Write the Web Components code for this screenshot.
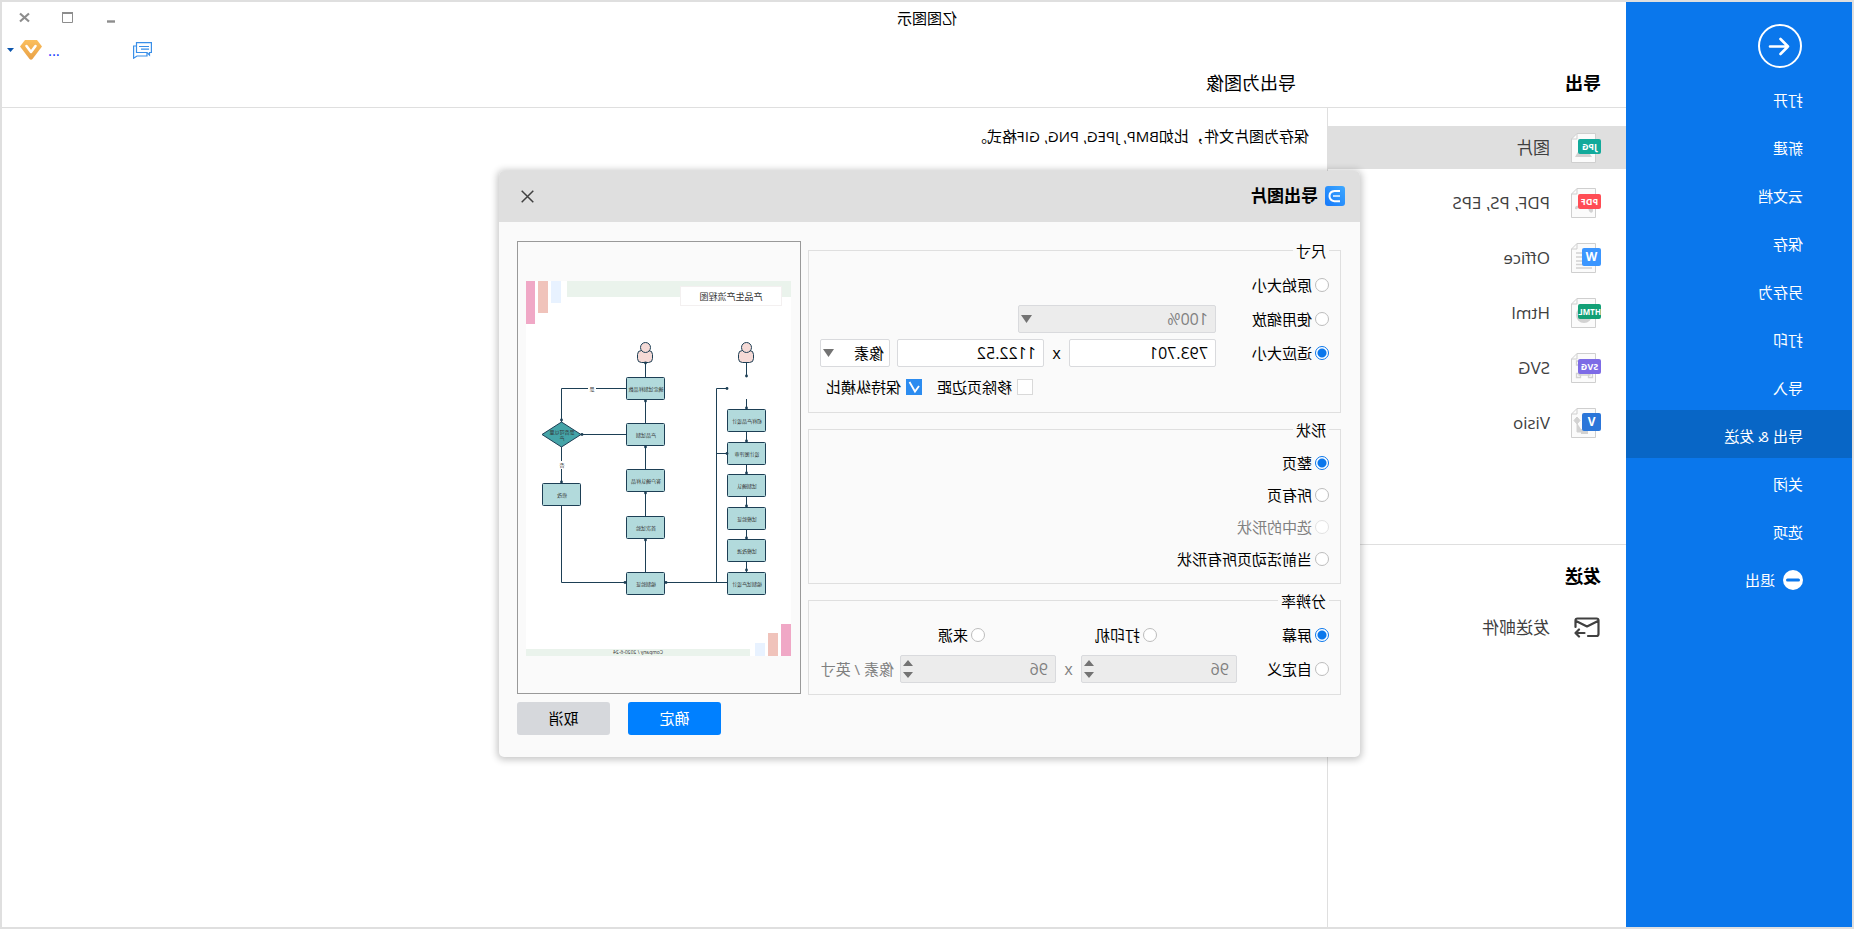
<!DOCTYPE html>
<html lang="zh-CN">
<head>
<meta charset="utf-8">
<title>亿图图示</title>
<style>
  html, body { margin: 0; }
  body {
    font-family: "Open Sans", "Noto Sans CJK SC", sans-serif;
    font-size: 15px;
    line-height: 20px;
    color: #000;
    background: #dfdfdf;
    overflow-x: hidden;
  }
</style>
</head>
<body>
<app-window></app-window>

<script>
const define = (name, html, setup) => {
  const template = document.createElement('template');
  template.innerHTML = html;
  customElements.define(name, class extends HTMLElement {
    constructor() {
      super();
      this.attachShadow({ mode: 'open' }).append(template.content.cloneNode(true));
    }
    connectedCallback() {
      if (setup) setup(this, this.shadowRoot);
    }
  });
};

/* Sidebar entry */
define('nav-item', `
  <style>
    :host { display: block; }
    a {
      display: flex; align-items: center; gap: 8px;
      box-sizing: border-box; height: 48px; padding: 4px 49px 0;
      color: #fff; text-decoration: none;
    }
    :host([active]) a { background: #0866c6; }
  </style>
  <a href="#"><slot name="icon"></slot><slot></slot></a>
`);

define('side-nav', `
  <style>
    :host { display: block; background: #0a77ec; }
    header { padding: 22px 50px 6px; }
    button { display: block; width: 44px; height: 44px; padding: 0; border: 0; background: none; }
    nav { display: flex; flex-direction: column; }
    svg { display: block; }
  </style>
  <header>
    <button type="button" aria-label="返回">
      <svg width="44" height="44" viewBox="0 0 44 44" fill="none" stroke="#fff" stroke-width="2">
        <circle cx="22" cy="22" r="21"/>
        <path d="M32 22.5H14M21.5 15L14 22.5L21.5 30" stroke-width="2.6" stroke-linecap="round" stroke-linejoin="round"/>
      </svg>
    </button>
  </header>
  <nav>
    <nav-item>打开</nav-item>
    <nav-item>新建</nav-item>
    <nav-item>云文档</nav-item>
    <nav-item>保存</nav-item>
    <nav-item>另存为</nav-item>
    <nav-item>打印</nav-item>
    <nav-item>导入</nav-item>
    <nav-item active>导出 &amp; 发送</nav-item>
    <nav-item>关闭</nav-item>
    <nav-item>选项</nav-item>
    <nav-item>
      <svg slot="icon" width="20" height="20" viewBox="0 0 20 20">
        <circle cx="10" cy="10" r="10" fill="#fff"/>
        <path d="M4.500 10H15.500" stroke="#0a77ec" stroke-width="3" stroke-linecap="round"/>
      </svg>
      退出
    </nav-item>
  </nav>
`);

/* Sheet of paper with a coloured format badge */
const sheets = {
  JPG: ['#12aa9b', '<path d="M9 24L15 15L19 20L22 17L26 24Z" fill="#d2d2d2"/>'],
  PDF: ['#ff4d55', '<path d="M8 22C8 19 11 18 13 20L12 23C10 26 8 25 8 22ZM19 17L25 18C27 20 26 22 24 21Z" fill="#d2d2d2"/>'],
  W: ['#3b96ff', '<path d="M9 10H25M9 14H25M9 18H25M9 21.500H25M9 25H25" stroke="#d2d2d2" stroke-width="1.300"/>'],
  HTML: ['#12a076', '<circle cx="17" cy="17" r="8" fill="#d2d2d2"/>'],
  SVG: ['#7d6be6', '<path d="M11 9H22V22H11ZM8.500 20.500h4v4h-4zM20.500 20.500h4v4h-4zM20.500 8h4v4h-4z" fill="none" stroke="#d2d2d2" stroke-width="1.300"/>'],
  V: ['#2b76d9', '<path d="M24 9l3 3.500-3 3.500-3-3.500zM24 15V24H18" fill="#d2d2d2" stroke="#d2d2d2"/><rect x="13" y="21" width="7" height="5" fill="#d2d2d2"/>']
};
define('doc-icon', `
  <style>:host { display: block; } svg { display: block; font-family: "Open Sans", sans-serif; font-weight: 700; }</style>
  <svg width="30" height="30" viewBox="0 0 30 30"></svg>
`, (host, root) => {
  const kind = host.getAttribute('kind');
  const [color, art] = sheets[kind];
  const short = kind.length === 1;
  const badge = short
    ? `<rect y="5" width="19" height="18" rx="2" fill="${color}"/><text x="9.500" y="18" font-size="12" fill="#fff" text-anchor="middle">${kind}</text>`
    : `<rect y="6" width="23" height="15" rx="2" fill="${color}"/><text x="11.500" y="17" font-size="${kind.length > 3 ? 8 : 9}" fill="#fff" text-anchor="middle">${kind}</text>`;
  root.querySelector('svg').innerHTML =
    `<path d="M5.500 .5H24L29.500 6V29.500H5.500Z" fill="#fbfbfb" stroke="#cfcfcf"/>
     <path d="M24 .5V6H29.500" fill="none" stroke="#cfcfcf"/>${art}${badge}`;
});

define('file-item', `
  <style>
    :host { display: block; }
    a {
      display: flex; align-items: center; gap: 21px;
      height: 43px; padding: 0 25px;
      font-size: 17px; color: #404040; text-decoration: none;
    }
    :host([selected]) a { background: #dfdfdf; }
  </style>
  <a href="#"><slot name="icon"></slot><slot></slot></a>
`);

define('export-list', `
  <style>
    :host { display: block; border-right: 1px solid #dfdfdf; }
    nav { display: flex; flex-direction: column; gap: 12px; padding: 18px 0 100px; border-bottom: 1px solid #dfdfdf; }
    h2 { margin: 0; padding: 19px 25px 18px; font-size: 18px; line-height: 24px; }
    svg { display: block; margin: 0 3px 0 1px; }
  </style>
  <nav>
    <file-item selected><doc-icon slot="icon" kind="JPG"></doc-icon>图片</file-item>
    <file-item><doc-icon slot="icon" kind="PDF"></doc-icon>PDF, PS, EPS</file-item>
    <file-item><doc-icon slot="icon" kind="W"></doc-icon>Office</file-item>
    <file-item><doc-icon slot="icon" kind="HTML"></doc-icon>Html</file-item>
    <file-item><doc-icon slot="icon" kind="SVG"></doc-icon>SVG</file-item>
    <file-item><doc-icon slot="icon" kind="V"></doc-icon>Visio</file-item>
  </nav>
  <h2>发送</h2>
  <file-item>
    <svg slot="icon" width="26" height="21" viewBox="0 0 26 21" fill="none" stroke="#404040" stroke-width="2.200" stroke-linecap="round" stroke-linejoin="round">
      <path d="M12 19H3.500Q1.500 19 1.500 17V3.500Q1.500 1.500 3.500 1.500H22.500Q24.500 1.500 24.500 3.500V10M2 4L13 9.500L24 4M15.500 16H24.500M21 12.500L24.500 16L21 19.500"/>
    </svg>
    发送邮件
  </file-item>
`);

define('title-bar', `
  <style>
    :host {
      display: grid; grid-template: 35px 1fr / 299px 1fr auto;
      box-sizing: border-box; height: 106px; border-bottom: 1px solid #dfdfdf;
    }
    .name { grid-area: 1 / 1 / 2 / 4; text-align: center; padding: 6px 226px 0 0; }
    h1, h2 { margin: 0; font-size: 18px; line-height: 24px; align-self: end; padding-bottom: 12px; }
    h1 { padding-left: 25px; }
    h2 { font-weight: 400; padding-left: 31px; }
    .window { grid-area: 1 / 3; display: flex; gap: 32px; padding: 5px 17px 0 0; justify-content: flex-end; }
    .window button { height: 20px; }
    .tools { grid-area: 2 / 3; display: flex; align-items: center; height: 22px; padding: 2px 5px 0 0; }
    button { display: flex; align-items: center; padding: 0; border: 0; background: none; font: inherit; color: #1035ff; }
    .account { margin-left: 73px; gap: 6px; }
    .tools button { height: 22px; }
  </style>
  <div class="name">亿图图示</div>
  <h1>导出</h1>
  <h2>导出为图像</h2>
  <div class="window">
    <button type="button" aria-label="最小化"><svg width="11" height="11" viewBox="0 0 11 11"><path d="M1 9.500H9" stroke="#8d8d8d" stroke-width="2.400"/></svg></button>
    <button type="button" aria-label="最大化"><svg width="11" height="11" viewBox="0 0 11 11"><path d="M.5 .5H10.500V10.500H.5Z" fill="none" stroke="#8d8d8d"/><path d="M0 1H11" stroke="#8d8d8d" stroke-width="2"/></svg></button>
    <button type="button" aria-label="关闭"><svg width="11" height="11" viewBox="0 0 11 11"><path d="M1 1.500L10 9.500M10 1.500L1 9.500" stroke="#8d8d8d" stroke-width="2.200"/></svg></button>
  </div>
  <div class="tools">
    <button type="button" aria-label="消息">
      <svg width="19" height="17" viewBox="0 0 19 17" fill="#fff" stroke="#3a8fe8" stroke-width="1.200">
        <path d="M18.400 4V16.200L15 14H5V4Z"/><path d="M.6 .6H15.500V10.500H5L2.500 13V10.500H.6Z"/><path d="M3 4.500H13M3 7.200H11"/>
      </svg>
    </button>
    <button type="button" class="account" aria-label="账户">
      <span>...</span>
      <svg width="22" height="20" viewBox="0 0 22 20"><defs><linearGradient id="gold" x2="0" y2="1"><stop stop-color="#fbbf5e"/><stop offset="1" stop-color="#e8a046"/></linearGradient></defs><path d="M5 0H17L22 6.500L12.500 19Q11 20.600 9.500 19L0 6.500Z" fill="url(#gold)"/><path d="M6.500 6L11 12L15.500 6" fill="none" stroke="#fff" stroke-width="2.600" stroke-linecap="round" stroke-linejoin="round"/></svg>
      <svg width="7" height="4" viewBox="0 0 7 4"><path d="M0 0H7L3.500 4Z" fill="#0b55ad"/></svg>
    </button>
  </div>
`);

/* Framed set of options with a caption on its border */
define('group-box', `
  <style>
    :host { display: block; }
    fieldset { margin: 0; padding: 7px 11px 8px; border: 1px solid #dfdfdf; min-width: 0; }
    legend { padding: 0 3px; line-height: 20px; }
  </style>
  <fieldset><legend></legend><slot></slot></fieldset>
`, (host, root) => { root.querySelector('legend').textContent = host.getAttribute('caption'); });

/* Preview of the page that will be exported */
const box = (x, y, label) =>
  `<rect x="${x - 19}.500" y="${y}.500" width="38" height="22" rx="1" fill="#b2dadc" stroke="#1d3f55"/>
   <text x="${x}" y="${y + 14}">${label}</text>`;
const dot = (x, y) => `<circle cx="${x}" cy="${y}" r="1.400" fill="#1d3f55" stroke="none"/>`;
const person = x =>
  `<rect x="${x - 7}.500" y="108.500" width="15" height="12" rx="4" fill="#f5dad6"/><circle cx="${x + .5}" cy="105.500" r="5" fill="#f5dad6"/>`;
define('flow-preview', `
  <style>
    :host { display: block; border: 1px solid #999; height: 453px; box-sizing: border-box; }
    svg { display: block; width: 100%; height: 100%; }
    text { font-size: 5px; fill: #333; stroke: none; text-anchor: middle; }
    .heading { font-size: 9px; }
    .footer { font-size: 5px; }
  </style>
  <svg viewBox="0 0 282 451" preserveAspectRatio="xMinYMin meet" fill="none" stroke="#1d3f55">
    <g stroke="none">
      <rect x="9" y="39" width="265" height="375" fill="#fff"/>
      <rect x="9" y="39" width="224" height="16" fill="#eaf3ec"/>
      <rect x="18" y="44" width="102" height="20" fill="#f3f0f0"/>
      <rect x="19" y="45" width="100" height="18" fill="#fff"/>
      <rect x="239" y="39" width="10" height="22" fill="#e8f2ff"/>
      <rect x="252" y="39" width="10" height="32" fill="#f0c3bb"/>
      <rect x="265" y="39" width="9" height="43" fill="#f0a8c6"/>
      <rect x="50" y="407" width="224" height="7" fill="#eaf3ec"/>
      <rect x="35" y="401" width="10" height="13" fill="#e8f2ff"/>
      <rect x="22" y="391" width="10" height="23" fill="#f0c3bb"/>
      <rect x="9" y="382" width="10" height="32" fill="#f0a8c6"/>
    </g>
    <path d="M53.500 121V135M53.500 157V340M73 146.500H83.500V340.500M73 211.500H83M73 340.500H135M154.500 121V340M174 146.500H238.500V340.500H174M174 192.500H238"/>
    ${person(53)}${person(154)}
    ${box(53, 167, '初样产品设计')}${box(53, 200, '设计图评审')}${box(53, 232, '试制确认')}${box(53, 265, '试模验证')}${box(53, 297, '试模改进')}${box(53, 330, '编制试产设计')}
    ${box(154, 135, '确定试制样品数')}${box(154, 181, '产品试制')}${box(154, 227, '客户确认样品')}${box(154, 274, '首次试验')}${box(154, 330, '编制验证')}
    ${box(238, 241, '修改')}
    <path d="M238.500 180L258 192.500L238.500 205L219 192.500Z" fill="#45a4a8"/>
    <text x="238" y="192">是否可以量</text><text x="238" y="198">产</text>
    <g stroke="none"><rect x="204" y="143" width="8" height="7" fill="#fff"/><rect x="235" y="219" width="7" height="8" fill="#fff"/></g>
    <text x="208" y="149">是</text><text x="238" y="225">否</text>
    ${dot(53.500, 134)}${dot(73, 146.500)}${dot(73, 211.500)}${dot(53.500, 166)}${dot(53.500, 199)}${dot(53.500, 231)}${dot(53.500, 264)}${dot(53.500, 296)}${dot(53.500, 328)}
    ${dot(154.500, 121)}${dot(154.500, 159)}${dot(154.500, 205)}${dot(154.500, 251)}${dot(154.500, 298)}${dot(134, 340.500)}${dot(175, 340.500)}
    ${dot(238.500, 178)}${dot(238.500, 240)}${dot(218, 192.500)}
    <text class="heading" x="69" y="58">产品生产流程图</text>
    <text class="footer" x="162" y="412">Company / 2020-6-24</text>
  </svg>
`);

const updown = `<svg width="10" height="20" viewBox="0 0 10 20"><path d="M0 7L5 1L10 7ZM0 13H10L5 19Z" fill="#737373"/></svg>`;
const down = `<svg width="11" height="8" viewBox="0 0 11 8"><path d="M0 0H11L5.500 8Z" fill="#737373"/></svg>`;
define('export-dialog', `
  <style>
    :host {
      display: block; width: 861px; max-width: 100%; background: #fafafa;
      border-radius: 5px; overflow: hidden; box-shadow: 0 1px 7px 2px rgba(0,0,0,.22);
    }
    header { display: flex; align-items: center; gap: 7px; height: 51px; padding: 0 22px 0 15px; background: #dfdfdf; }
    h2 { flex: 1; margin: 0; font-size: 17px; line-height: 24px; }
    header svg { display: block; }
    button { font: inherit; border: 0; padding: 0; }
    header button { background: none; }
    .body { display: grid; grid-template-columns: 1fr 284px; gap: 7px; padding: 19px 19px 22px 19px; }
    .groups { display: flex; flex-direction: column; gap: 7px; }
    .row { display: flex; align-items: center; height: 34px; }
    .row.tight { height: 32px; }
    .row.checks { gap: 15px; padding-left: 296px; }
    label { display: flex; align-items: center; gap: 3px; white-space: nowrap; }
    .checks label { gap: 5px; }
    label.size { width: 113px; }
    label.third { width: 172px; }
    label.custom { width: 92px; }
    label.off { color: #808080; }
    input, select { font: inherit; box-sizing: border-box; margin: 0; }
    input[type=radio] {
      appearance: none; width: 14px; height: 14px; border: 1px solid #bdbdbd;
      border-radius: 50%; background: #fff; flex: none;
    }
    input[type=radio]:checked { border-color: #0a77ec; background: radial-gradient(circle, #0a77ec 4px, #fff 5px); }
    input[type=radio]:disabled { border-color: #e2e2e2; }
    input[type=checkbox] { appearance: none; width: 16px; height: 16px; border: 1px solid #d9d9d9; background: #fff; flex: none; }
    input[type=checkbox]:checked {
      border: 0;
      background: #2c8cf0 url("data:image/svg+xml,%3Csvg xmlns='http://www.w3.org/2000/svg' viewBox='0 0 16 16'%3E%3Cpath d='M3 7L7 12.500L12.500 3' fill='none' stroke='%23fff' stroke-width='1.800'/%3E%3C/svg%3E");
    }
    .field { display: grid; align-items: center; }
    .field > * { grid-area: 1 / 1; }
    .field > svg { justify-self: end; margin-right: 3px; pointer-events: none; }
    .field input, .field select {
      appearance: none; width: 100%; height: 28px; padding: 0 7px;
      border: 1px solid #d9dadd; border-radius: 2px; background: #fff; color: #000; font-size: 16px;
    }
    .field input[type=number] { appearance: textfield; }
    .field :disabled { background: #ececec; color: #808080; opacity: 1; }
    .field .unit { font-size: 15px; padding: 0 5px; }
    .zoom { width: 198px; } .length { width: 147px; } .units { width: 70px; margin-left: 7px; } .dpi { width: 156px; }
    .times { width: 25px; text-align: center; font-size: 16px; }
    .gray { color: #808080; }
    .per { margin-left: 6px; }
    .side { display: flex; flex-direction: column; gap: 8px; }
    .actions { display: flex; justify-content: flex-end; gap: 18px; }
    .actions button { width: 93px; height: 33px; border-radius: 3px; background: #d6d8dc; color: #000; }
    .actions .primary { background: #0080ff; color: #fff; }
  </style>
  <header>
    <svg width="20" height="20" viewBox="0 0 20 20"><defs><linearGradient id="blue" x2="1" y2="1" x1="0" y1="0"><stop stop-color="#3fa9ff"/><stop offset="1" stop-color="#1478fa"/></linearGradient></defs><rect width="20" height="20" rx="3" fill="url(#blue)"/><path d="M5 5H10.500Q15.500 5.500 15.500 10T10.500 15.200H5" fill="none" stroke="#fff" stroke-width="2"/><path d="M5 10H12" stroke="#bfe0ff" stroke-width="1.800"/></svg>
    <h2>导出图片</h2>
    <button type="button" aria-label="关闭对话框"><svg width="13" height="13" viewBox="0 0 13 13"><path d="M.7 .7L12.300 12.300M12.300 .7L.7 12.300" stroke="#404040" stroke-width="1.500"/></svg></button>
  </header>
  <form class="body">
    <div class="groups">
      <group-box caption="尺寸">
        <div class="row"><label><input type="radio" name="size">原始大小</label></div>
        <div class="row">
          <label class="size"><input type="radio" name="size">使用缩放</label>
          <span class="field zoom"><select disabled aria-label="缩放比例"><option>100%</option></select>${down}</span>
        </div>
        <div class="row">
          <label class="size"><input type="radio" name="size" checked>适应大小</label>
          <span class="field length"><input type="text" value="793.701" aria-label="宽度"></span>
          <span class="times">x</span>
          <span class="field length"><input type="text" value="1122.52" aria-label="高度"></span>
          <span class="field units"><select class="unit" aria-label="单位"><option>像素</option></select>${down}</span>
        </div>
        <div class="row checks">
          <label><input type="checkbox">移除页边距</label>
          <label><input type="checkbox" checked>保持纵横比</label>
        </div>
      </group-box>
      <group-box caption="形状">
        <div class="row tight"><label><input type="radio" name="shape" checked>整页</label></div>
        <div class="row tight"><label><input type="radio" name="shape">所有页</label></div>
        <div class="row tight"><label class="off"><input type="radio" name="shape" disabled>选中的形状</label></div>
        <div class="row tight"><label><input type="radio" name="shape">当前活动页所有形状</label></div>
      </group-box>
      <group-box caption="分辨率">
        <div class="row">
          <label class="third"><input type="radio" name="dpi" checked>屏幕</label>
          <label class="third"><input type="radio" name="dpi">打印机</label>
          <label><input type="radio" name="dpi">来源</label>
        </div>
        <div class="row">
          <label class="custom"><input type="radio" name="dpi">自定义</label>
          <span class="field dpi"><input type="number" value="96" disabled aria-label="水平分辨率">${updown}</span>
          <span class="times gray">x</span>
          <span class="field dpi"><input type="number" value="96" disabled aria-label="垂直分辨率">${updown}</span>
          <span class="gray per">像素 / 英寸</span>
        </div>
      </group-box>
    </div>
    <div class="side">
      <flow-preview></flow-preview>
      <div class="actions">
        <button type="button" class="primary">确定</button>
        <button type="button">取消</button>
      </div>
    </div>
  </form>
`);

/* The whole interface is shown as in a mirror: the tree below is written left to right and flipped once here. */
define('app-window', `
  <style>
    :host {
      display: grid; grid-template-columns: 226px 1fr; position: relative;
      box-sizing: border-box; min-height: 100vh; border: 2px solid #dfdfdf;
      background: #fff; transform: scaleX(-1);
    }
    main { display: grid; grid-template: auto 1fr / 299px 1fr; min-width: 0; }
    title-bar { grid-column: 1 / 3; }
    p { margin: 0; padding: 18px; }
    .layer {
      position: absolute; inset: 0; display: flex; align-items: center; justify-content: center;
      padding: 0 5px 2px 0; box-sizing: border-box;
    }
  </style>
  <side-nav></side-nav>
  <main>
    <title-bar></title-bar>
    <export-list></export-list>
    <p>保存为图片文件，比如BMP, JPEG, PNG, GIF格式。</p>
  </main>
  <div class="layer"><export-dialog role="dialog" aria-label="导出图片"></export-dialog></div>
`);
</script>
</body>
</html>
